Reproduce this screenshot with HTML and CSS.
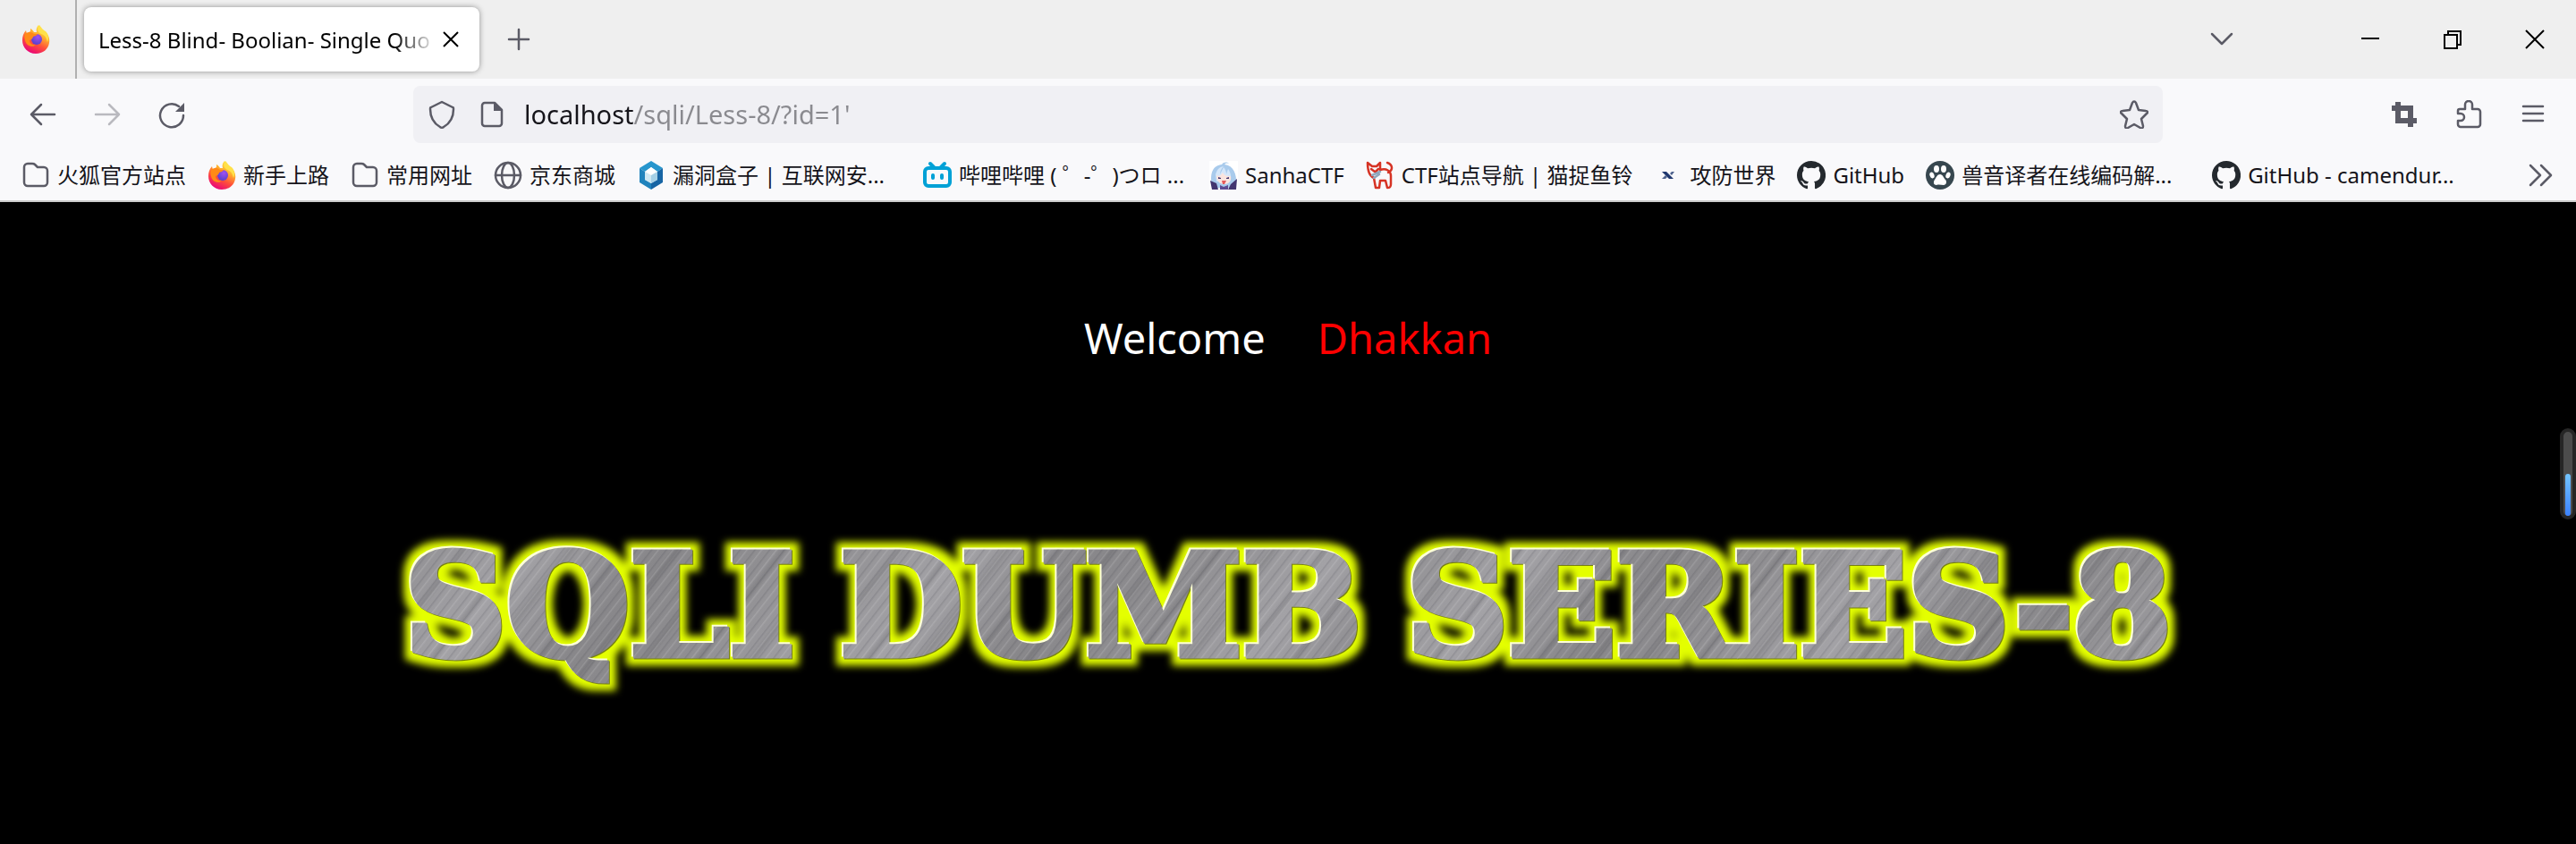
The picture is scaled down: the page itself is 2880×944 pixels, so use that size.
FILE: index.html
```html
<!DOCTYPE html>
<html lang="zh-CN">
<head>
<meta charset="utf-8">
<title>Less-8 Blind- Boolian- Single Quotes- String</title>
<link rel="stylesheet" href="styles.css">
</head>
<body>
<svg class="defs" aria-hidden="true">
  <defs>
    <linearGradient id="fox-body" x1=".8" y1="0" x2=".3" y2="1"><stop offset="0" stop-color="#fff44f"/><stop offset=".35" stop-color="#ffb02e"/><stop offset=".65" stop-color="#ff4f3a"/><stop offset="1" stop-color="#e8007c"/></linearGradient>
    <radialGradient id="fox-globe" cx=".6" cy=".3" r=".8"><stop offset="0" stop-color="#a050f0"/><stop offset="1" stop-color="#4a3fc8"/></radialGradient>
    <filter id="glow" x="-5%" y="-30%" width="110%" height="160%" color-interpolation-filters="sRGB">
      <feMorphology in="SourceAlpha" operator="dilate" radius="8" result="wide"/>
      <feGaussianBlur in="wide" stdDeviation="4" result="soft"/>
      <feFlood flood-color="#e4ff00"/>
      <feComposite in2="soft" operator="in" result="halo"/>
      <feOffset in="SourceAlpha" dx="-2" dy="-2" result="shift"/>
      <feFlood flood-color="#fdffd8"/>
      <feComposite in2="shift" operator="in" result="light"/>
      <feOffset in="SourceAlpha" dx="1" dy="1" result="lower"/>
      <feFlood flood-color="#77800f"/>
      <feComposite in2="lower" operator="in" result="shade"/>
      <feMerge><feMergeNode in="halo"/><feMergeNode in="shade"/><feMergeNode in="light"/><feMergeNode in="SourceGraphic"/></feMerge>
    </filter>
    <symbol id="firefox" viewBox="0 0 32 32">
      <path fill="url(#fox-body)" d="M19 0c2 2 3 5 3 8 3 0 4 1 5 2 0-1 0-2-1-3 4 3 6 8 5 13-1 7-7 12-15 12C7 32 1 25 1 17c0-4 1-8 4-11l1 4c1-1 2-2 4-3V4c2 1 3 2 4 4h3c-1-3 0-6 2-8z"/>
      <path fill="#ffe14a" d="M20 0c2 2 3 5 7 7 3 3 4 8 2 12-1-5-3-8-7-9-4-2-5-6-2-10z"/>
      <circle cx="17" cy="16" r="6" fill="url(#fox-globe)"/>
      <path fill="#ff8a16" d="M5 9c4-2 7-1 9 1h4c-1 2-3 2-5 3 0 2-2 3-4 4 0 3 3 6 7 5-4 4-11 1-12-5-1-3-1-6 1-8z"/>
    </symbol>
    <symbol id="folder" viewBox="0 0 32 32"><path d="M3 7a4 4 0 0 1 4-4h5c1 0 2 0 3 1l3 3h7a4 4 0 0 1 4 4v13a4 4 0 0 1-4 4H7a4 4 0 0 1-4-4z"/></symbol>
    <symbol id="globe" viewBox="0 0 32 32"><circle cx="16" cy="16" r="14"/><ellipse cx="16" cy="16" rx="7" ry="14"/><path d="M2 16h28"/></symbol>
    <symbol id="github" viewBox="0 0 16 16"><path fill="#24292e" d="M8 0C3.58 0 0 3.58 0 8c0 3.54 2.29 6.53 5.47 7.59.4.07.55-.17.55-.38v-1.49c-2.01.37-2.53-.49-2.69-.94-.09-.23-.48-.94-.82-1.13-.28-.15-.68-.52-.01-.53.63-.01 1.08.58 1.23.82.72 1.21 1.87.87 2.33.66.07-.52.28-.87.51-1.07-1.78-.2-3.64-.89-3.64-3.95 0-.87.31-1.59.82-2.15-.08-.2-.36-1.02.08-2.12 0 0 .67-.21 2.2.82a7.6 7.6 0 0 1 4 0c1.53-1.04 2.2-.82 2.2-.82.44 1.1.16 1.92.08 2.12.51.56.82 1.27.82 2.15 0 3.07-1.87 3.75-3.65 3.95.29.25.54.73.54 1.48v2.2c0 .21.15.46.55.38A8 8 0 0 0 8 0z"/></symbol>
  </defs>
</svg>

<header class="browser">
  <div class="tabbar">
    <button class="pinned" aria-label="Firefox"><svg class="icon flat"><use href="#firefox"/></svg></button>
    <div class="tab">
      <span class="tab-title">Less-8 Blind- Boolian- Single Quo</span>
      <button class="tab-close" aria-label="关闭标签页"><svg class="icon thin" viewBox="0 0 32 32"><path d="M8 8l16 16M24 8L8 24"/></svg></button>
    </div>
    <button class="new-tab" aria-label="新建标签页"><svg class="icon" viewBox="0 0 32 32"><path d="M16 5v22M5 16h22"/></svg></button>
    <div class="window-controls">
      <button class="all-tabs" aria-label="列出所有标签页"><svg class="icon" viewBox="0 0 32 32"><path d="M5 10l11 11 11-11"/></svg></button>
      <button aria-label="最小化"><svg class="icon thin" viewBox="0 0 32 32"><path d="M6 15h20"/></svg></button>
      <button aria-label="还原"><svg class="icon thin" viewBox="0 0 32 32"><path d="M7 11h14v15H7zM11 11V7h14v15h-4"/></svg></button>
      <button aria-label="关闭"><svg class="icon thin" viewBox="0 0 32 32"><path d="M6 6l20 20M26 6L6 26"/></svg></button>
    </div>
  </div>

  <nav class="navbar">
    <div class="nav-buttons">
      <button aria-label="后退"><svg class="icon" viewBox="0 0 32 32"><path d="M29 16H3M14 5L3 16l11 11"/></svg></button>
      <button aria-label="前进" class="off" disabled><svg class="icon" viewBox="0 0 32 32"><path d="M3 16h26M18 5l11 11-11 11"/></svg></button>
      <button aria-label="重新载入"><svg class="icon" viewBox="0 0 32 32"><path d="M24 7a13 13 0 1 0 5 10"/><path class="solid" d="M30 3v10H20z"/></svg></button>
    </div>
    <form class="urlbar">
      <button type="button" aria-label="跟踪保护"><svg class="icon" viewBox="0 0 32 32"><path d="M16 2l12 6c1 0 1 1 1 2 0 9-4 16-11 20-1 1-3 1-4 0C7 26 3 19 3 10c0-1 0-2 1-2z"/></svg></button>
      <button type="button" aria-label="网站信息"><svg class="icon" viewBox="0 0 32 32"><path d="M8 3h11l8 8v15a3 3 0 0 1-3 3H8a3 3 0 0 1-3-3V6a3 3 0 0 1 3-3z"/><path class="solid" d="M18 3l9 9h-9z"/></svg></button>
      <input class="address" type="text" aria-label="网址" value="localhost/sqli/Less-8/?id=1'">
      <button type="button" aria-label="添加书签"><svg class="icon" viewBox="0 0 32 32"><path d="M14 3c1-2 3-2 4 0l3 8 8 1c2 0 3 2 1 3l-6 6 2 8c0 2-1 3-3 2l-7-4-7 4c-2 1-3 0-3-2l2-8-6-6c-2-1-1-3 1-3l8-1z"/></svg></button>
    </form>
    <div class="toolbar-buttons">
      <button aria-label="截图"><svg class="icon" viewBox="0 0 32 32"><path class="solid" fill-rule="evenodd" d="M6 2h6v4h14v14h4v6h-4v4h-6v-4H6V12H2V6h4zM12 12v8h8v-8z"/></svg></button>
      <button aria-label="扩展"><svg class="icon" viewBox="0 0 32 32"><path d="M6 10h6V5a4 4 0 0 1 8 0v5h6a3 3 0 0 1 3 3v14a3 3 0 0 1-3 3H7a3 3 0 0 1-3-3v-4h3a4 4 0 0 0 0-8H4v-3a2 2 0 0 1 2-2z"/></svg></button>
      <button aria-label="菜单"><svg class="icon" viewBox="0 0 32 32"><path d="M5 7h22M5 15h22M5 23h22"/></svg></button>
    </div>
  </nav>

  <nav class="bookmarks" aria-label="书签">
    <a href="#"><svg class="icon"><use href="#folder"/></svg><span>火狐官方站点</span></a>
    <a href="#"><svg class="icon flat"><use href="#firefox"/></svg><span>新手上路</span></a>
    <a href="#"><svg class="icon"><use href="#folder"/></svg><span>常用网址</span></a>
    <a href="#"><svg class="icon"><use href="#globe"/></svg><span>京东商城</span></a>
    <a href="#"><svg class="icon flat" viewBox="0 0 32 32"><path fill="#2796cd" d="M16 0l13 8-6 4-7-5-7 5-6-4z"/><path fill="#2083bd" d="M3 8l6 4v9l7 4v7L3 24z"/><path fill="#1765a4" d="M29 8l-6 4v9l-7 4v7l13-8z"/><path fill="#fff" d="M16 7l7 5-7 4-7-4z"/><path fill="#cfe8f3" d="M9 12l7 4v9l-7-4z"/><path fill="#a5d0e6" d="M23 12l-7 4v9l7-4z"/></svg><span class="long">漏洞盒子 | 互联网安...</span></a>
    <a href="#"><svg class="icon bili" viewBox="0 0 32 32"><rect x="2" y="8" width="28" height="20" rx="4"/><path d="M8 3l4 4M24 3l-4 4M11 16v3M21 16v3"/></svg><span class="long">哔哩哔哩 ( ゜-゜)つロ ...</span></a>
    <a href="#"><svg class="icon flat" viewBox="0 0 32 32"><path fill="#fff" d="M0 0h32v32H0z"/><path fill="#a9cbec" d="M3 28C0 12 5 5 14 4c2-3 6-3 8-1-3-1-4 0-5 1 10 1 14 11 13 22l-6 4H7z"/><path fill="#d4e7fa" d="M7 15c2-6 4-8 9-9-3 3-4 6-4 9l4-8c2 2 3 5 3 8l2-6c3 4 4 9 2 14H8z"/><path fill="#fbe5df" d="M8 16c3 2 5 0 7-3 2 4 5 4 9 4 1 5-2 9-7 9-6 0-9-4-9-10z"/><path fill="#42356f" d="M1 22l7 3 2 7H3zM31 20l-7 6-3 6h9zM10 18l3 1v1h-3zM19 19l3-1v2h-3z"/><path fill="#e45c5c" d="M14 22h5l-2 4h-2z"/><path fill="#5d4b93" d="M12 27l4 2 5-2v5h-9z"/></svg><span>SanhaCTF</span></a>
    <a href="#"><svg class="icon cat" viewBox="0 0 32 32"><path d="M2 2l5 4h5l4-4v8c7-2 12 1 12 7v9c0 4-2 4-4 4l-2-8h-6l-1 8h-4l-2-11c-5-2-7-9-7-17zM25 13c6-3 5-9-1-11"/><path d="M6 9l4 3M14 9l-3 3"/><path stroke="#8fa6bb" d="M7 16l9-4M9 19l6-4"/></svg><span>CTF站点导航 | 猫捉鱼铃</span></a>
    <a href="#"><svg class="icon flat" viewBox="0 0 32 32"><path fill="#20386f" d="M9 12h5l8 8h-5z"/><path fill="#4f638e" d="M20 12h3l-3 4-2-2zM9 20l4-4 2 2-2 2z"/></svg><span>攻防世界</span></a>
    <a href="#"><svg class="icon flat"><use href="#github"/></svg><span>GitHub</span></a>
    <a href="#"><svg class="icon flat" viewBox="0 0 32 32"><circle cx="16" cy="16" r="16" fill="#37474f"/><g fill="#fff"><ellipse cx="12" cy="9" rx="3" ry="4"/><ellipse cx="20" cy="9" rx="3" ry="4"/><ellipse cx="7" cy="16" rx="2.500" ry="3.500" transform="rotate(-20 7 16)"/><ellipse cx="25" cy="16" rx="2.500" ry="3.500" transform="rotate(20 25 16)"/><path d="M16 15c3 0 4 4 6 6s1 6-2 6-5-1-8 0c-3 0-4-3-2-6s3-6 6-6z"/></g></svg><span class="long">兽音译者在线编码解...</span></a>
    <a href="#"><svg class="icon flat"><use href="#github"/></svg><span>GitHub - camendur...</span></a>
    <button class="more" aria-label="更多书签"><svg class="icon" viewBox="0 0 32 32"><path d="M5 5l11 11L5 27M17 5l11 11-11 11"/></svg></button>
  </nav>
</header>

<main class="page">
  <p class="welcome"><span>Welcome</span><span class="name">Dhakkan</span></p>
  <h1 class="banner"><span>SQLI</span> <span>DUMB</span> <span>SERIES-8</span></h1>
  <div class="meter" aria-hidden="true"><div class="meter-fill"></div></div>
</main>
</body>
</html>
```
FILE: styles.css
```css
* { box-sizing: border-box; }

body {
  margin: 0;
  min-height: 100vh;
  display: flex;
  flex-direction: column;
  background: #000;
  color: #15141a;
  font-family: "Noto Sans", "Noto Sans CJK SC", sans-serif;
  font-size: 24px;
}

.defs { position: absolute; width: 0; height: 0; }

button {
  display: flex;
  align-items: center;
  justify-content: center;
  flex: none;
  margin: 0;
  padding: 0;
  border: 0;
  background: none;
  color: #5b5b66;
}

.icon {
  flex: none;
  width: 32px;
  height: 32px;
  fill: none;
  stroke: currentColor;
  stroke-width: 2.5;
  stroke-linecap: round;
  stroke-linejoin: round;
}
.icon .solid { fill: currentColor; stroke: none; }
.icon.thin { color: #000; stroke-width: 2; stroke-linecap: butt; stroke-linejoin: miter; }
.icon.flat { stroke: none; }
.icon.bili { stroke: #00a1d6; stroke-width: 4; }
.icon.cat { stroke: #d63324; }

.browser { background: #f9f9fb; border-bottom: 2px solid #ccc; }

/* Tabs */
.tabbar { display: flex; align-items: center; height: 88px; background: #efefef; }
.pinned { width: 86px; height: 100%; padding-right: 4px; border-right: 2px solid #b0b0b0; }
.tab {
  display: flex;
  align-items: center;
  width: 442px;
  height: 72px;
  margin-left: 8px;
  padding: 0 16px;
  border-radius: 8px;
  background: #fff;
  box-shadow: 0 0 6px rgba(0, 0, 0, .4);
}
.tab-title {
  flex: 1;
  white-space: nowrap;
  color: #000;
  mask-image: linear-gradient(to left, transparent, #000 48px);
}
.tab-close { width: 32px; height: 48px; }
.new-tab { width: 72px; height: 72px; margin-left: 8px; }
.window-controls { display: flex; height: 100%; margin-left: auto; }
.window-controls button { width: 92px; }
.window-controls .all-tabs { margin-right: 74px; }

/* Navigation */
.navbar { display: flex; align-items: center; height: 80px; padding: 0 12px; }
.nav-buttons { display: flex; flex: 1; }
.nav-buttons button { width: 72px; height: 64px; }
.nav-buttons .off { opacity: .4; }
.urlbar {
  display: flex;
  align-items: center;
  flex: 0 1 1956px;
  height: 64px;
  padding: 0 4px;
  border-radius: 8px;
  background: #f0f0f4;
}
.urlbar button { width: 56px; height: 56px; }
.address {
  flex: 1;
  min-width: 0;
  padding: 0 0 0 8px;
  border: 0;
  outline: 0;
  font: 29px/48px "Noto Sans", "Noto Sans CJK SC", sans-serif;
  color: transparent;
  background: linear-gradient(to right, #15141a 131px, #8a8a8f 131px);
  -webkit-background-clip: text;
  background-clip: text;
}
.toolbar-buttons { display: flex; flex: 1; justify-content: flex-end; }
.toolbar-buttons button { width: 72px; height: 64px; }

/* Bookmarks */
.bookmarks {
  display: flex;
  align-items: center;
  gap: 24px;
  height: 56px;
  padding: 0 24px;
}
.bookmarks a {
  display: flex;
  align-items: center;
  gap: 8px;
  flex: none;
  color: #15141a;
  line-height: 32px;
  white-space: nowrap;
  text-decoration: none;
}
.bookmarks a .icon { color: #5b5b66; }
.long { width: 256px; }
.more { margin-left: auto; }

/* Page */
.page { position: relative; flex: 1; padding-top: 120px; }
.welcome {
  display: flex;
  justify-content: center;
  gap: 58px;
  margin: 0;
  color: #fff;
  font-size: 47px;
  line-height: 64px;
}
.name { color: #f00; }
.banner {
  display: flex;
  justify-content: center;
  gap: 50px;
  margin: 172px 0 0;
  font: bold 158px/192px "DejaVu Serif", serif;
  white-space: nowrap;
  filter: url(#glow);
}
.banner span {
  color: transparent;
  -webkit-text-stroke: 7px transparent;
  background:
    repeating-linear-gradient(128deg, transparent 0 3px, rgba(60, 60, 70, .16) 4px, transparent 6px 9px, rgba(255, 255, 255, .14) 10px, transparent 12px 13px),
    repeating-linear-gradient(128deg, transparent 0 20px, rgba(50, 50, 55, .15) 26px, transparent 31px 47px),
    repeating-linear-gradient(128deg, #8e8d90 0, #a3a2a6 130px, #88878a 240px, #8e8d90 330px);
  -webkit-background-clip: text;
  background-clip: text;
}
.meter {
  position: absolute;
  right: 0;
  top: 253px;
  width: 18px;
  height: 102px;
  padding: 47px 2px 0;
  border: 4px solid #262626;
  border-radius: 9px;
  background: #4c4c4c;
}
.meter-fill { height: 47px; border-radius: 3px; background: linear-gradient(#73c4ff, #3b82ff); }
```
